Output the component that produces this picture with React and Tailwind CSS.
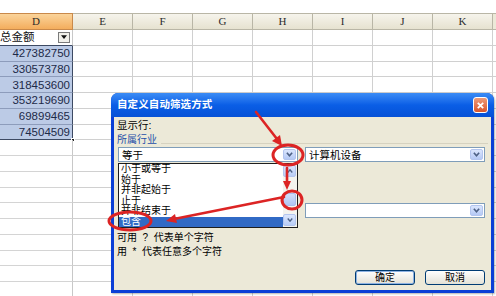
import React from "react";

const CJK = { fontFamily: '"Liberation Sans", "Noto Sans CJK SC", sans-serif' };

const cols = ["D", "E", "F", "G", "H", "I", "J", "K"];
const nums = ["427382750", "330573780", "318453600", "353219690", "69899465", "74504509"];

function Chevron({ className = "" }) {
  return (
    <svg viewBox="0 0 10 8" className={className}>
      <polyline points="2,2 5,5.5 8,2" fill="none" stroke="#4d6185" strokeWidth="1.8" />
    </svg>
  );
}

function ChevronUp({ className = "" }) {
  return (
    <svg viewBox="0 0 10 8" className={className}>
      <polyline points="2,6 5,2.5 8,6" fill="none" stroke="#4d6185" strokeWidth="1.8" />
    </svg>
  );
}

function ComboBtn() {
  return (
    <div className="w-[13px] h-full bg-gradient-to-b from-[#dbe6fd] to-[#b5c9f5] border border-[#b3c5ef] rounded-[2px] flex items-center justify-center">
      <Chevron className="w-[9px] h-[7px]" />
    </div>
  );
}

function Combo({ text, className = "" }) {
  return (
    <div className={"h-[15px] bg-white border border-[#7f9db9] flex items-stretch p-[1px] " + className}>
      <div className="flex-1 pl-[2px] text-[10.5px] leading-[12px] text-black">{text}</div>
      <ComboBtn />
    </div>
  );
}

function SheetRow({ i }) {
  const isHead = i === 0;
  const isData = i >= 1 && i <= 6;
  return (
    <div className="flex h-[15.75px]">
      <div
        className={
          "relative w-[73px] shrink-0 border-r flex items-center justify-end pr-[2px] " +
          (isData
            ? "bg-[#bccbe6] border-r-[#3d4a63] border-b border-b-[#8d9cbb] text-[#1d2a48]"
            : isHead
            ? "bg-white border-r-[#c8c8c8] border-b border-b-[#3d4a63]"
            : "border-r-[#c8c8c8] border-b border-b-[#d4d4d4]") +
          (i === 6 ? " !border-b-[#3d4a63]" : "")
        }
      >
        {isHead && (
          <>
            <span className="absolute left-0 top-[1px] text-[11.5px] leading-[13px] text-[#111]" style={CJK}>
              总金额
            </span>
            <div className="w-[12px] h-[11px] border border-[#7a7a7a] bg-[#f1f0ea] flex items-center justify-center">
              <svg viewBox="0 0 8 5" className="w-[6px] h-[4px]">
                <polygon points="0,0 8,0 4,5" fill="#111" />
              </svg>
            </div>
          </>
        )}
        {isData && (
          <span className="text-[11.5px] leading-[13px] mt-[1px]" style={{ fontFamily: '"Liberation Sans", sans-serif' }}>
            {nums[i - 1]}
          </span>
        )}
        {i === 6 && <div className="absolute right-[-3px] bottom-[-3px] w-[4px] h-[4px] bg-[#222] border border-white" />}
      </div>
      {cols.slice(1).map((c) => (
        <div key={c} className="w-[60px] shrink-0 border-r border-b border-[#d0d0d0]" />
      ))}
      <div className="flex-1 border-b border-[#d0d0d0]" />
    </div>
  );
}

export default function App() {
  const listItems = ["小于或等于", "始于", "并非起始于", "止于", "并非结束于", "包含"];
  return (
    <div className="relative w-[496px] h-[296px] overflow-hidden bg-white" style={CJK}>
      <div className="h-[13px] bg-white" />
      {/* header */}
      <div className="flex h-[17px]">
        {cols.map((c, idx) => (
          <div
            key={c}
            className={
              (idx === 0
                ? "w-[73px] bg-gradient-to-b from-[#fbd49a] to-[#f3ad5c] border-[#c9894a] "
                : "w-[60px] bg-gradient-to-b from-[#f6f4ec] to-[#e6e2d0] border-[#b9b6a6] ") +
              "shrink-0 border-r border-b border-t flex items-center justify-center text-[11px] text-[#2b2b2b]"
            }
            style={{ fontFamily: '"Liberation Serif", serif' }}
          >
            {c}
          </div>
        ))}
        <div className="flex-1 bg-[#ece9d8] border-b border-t border-[#b9b6a6]" />
      </div>
      {Array.from({ length: 17 }).map((_, i) => (
        <SheetRow key={i} i={i} />
      ))}

      {/* dialog */}
      <div className="absolute left-[111px] top-[93px] w-[383px] h-[200px] rounded-t-[7px] bg-[#0b3fd6] flex flex-col overflow-hidden shadow-[1px_1px_2px_rgba(0,0,0,0.3)]">
        <div className="h-[24px] shrink-0 bg-gradient-to-b from-[#3b8cf5] via-[#0a5ee6] to-[#0651d6] flex items-center justify-between pl-[6px] pr-[6px]">
          <span className="text-white font-bold text-[10.5px] tracking-[0.1px]" style={CJK}>
            自定义自动筛选方式
          </span>
          <div className="w-[15px] h-[16px] rounded-[3px] border border-white bg-gradient-to-b from-[#ed9a78] to-[#d8552b] flex items-center justify-center">
            <svg viewBox="0 0 10 10" className="w-[9px] h-[9px]">
              <path d="M2 2 L8 8 M8 2 L2 8" stroke="white" strokeWidth="2" />
            </svg>
          </div>
        </div>
        <div className="relative flex-1 mx-[3px] mb-[3px] bg-[#ece9d8] px-[3px] flex flex-col">
          <div className="mt-[2px] h-[12px] text-[10.5px] leading-[12px] text-black">显示行:</div>
          <div className="mt-[3px] h-[12px] flex items-center">
            <span className="text-[10px] leading-[12px] text-[#1d4fa8]">所属行业</span>
            <div className="flex-1 ml-[4px] mt-[6px] h-[1px] bg-[#d6d2c0]" />
          </div>
          <div className="mt-[1px] flex gap-[7px] pl-[1px]">
            <Combo text="等于" className="w-[180px]" />
            <Combo text="计算机设备" className="w-[180px]" />
          </div>
          <div className="mt-[41px] flex gap-[7px] pl-[1px]">
            <div className="w-[180px]" />
            <Combo text="" className="w-[180px] h-[14px]" />
          </div>
          <div className="mt-[14px] h-[12px] text-[10px] leading-[12px] text-black whitespace-pre">可用  ?  代表单个字符</div>
          <div className="mt-[2px] h-[12px] text-[10px] leading-[12px] text-black whitespace-pre">用  *  代表任意多个字符</div>
          <div className="mt-[12px] flex justify-end gap-[10px] pr-[3px]">
            <div className="w-[60px] h-[15px] rounded-[3px] border border-[#003c74] bg-gradient-to-b from-white to-[#e3e1d6] shadow-[inset_0_0_0_1px_#8db2e3] flex items-center justify-center text-[10px] text-black">
              确定
            </div>
            <div className="w-[60px] h-[15px] rounded-[3px] border border-[#003c74] bg-gradient-to-b from-white to-[#e3e1d6] flex items-center justify-center text-[10px] text-black">
              取消
            </div>
          </div>

          {/* dropdown list */}
          <div className="absolute left-[4px] top-[46px] w-[180px] h-[65px] bg-white border border-[#1e1e1e] flex">
            <div className="flex-1 flex flex-col">
              {listItems.map((t, i) => (
                <div
                  key={t}
                  className={
                    "h-[10.5px] pl-[2px] text-[10px] leading-[10.5px] " +
                    (i === 5 ? "bg-[#316ac5] text-white" : "text-black")
                  }
                >
                  {t}
                </div>
              ))}
            </div>
            <div className="w-[14px] bg-[#f3f3ee] flex flex-col items-stretch py-[1px] pr-[1px]">
              <div className="h-[12px] rounded-[2px] bg-gradient-to-b from-[#dbe6fd] to-[#b9cdf6] border border-[#b3c5ef] flex items-center justify-center">
                <ChevronUp className="w-[8px] h-[6px]" />
              </div>
              <div className="mt-[16px] h-[13px] rounded-[2px] bg-gradient-to-b from-[#d1defb] to-[#b0c5f3] border border-[#a9bdec]" />
              <div className="flex-1" />
              <div className="h-[12px] rounded-[2px] bg-gradient-to-b from-[#dbe6fd] to-[#b9cdf6] border border-[#b3c5ef] flex items-center justify-center">
                <Chevron className="w-[8px] h-[6px]" />
              </div>
            </div>
          </div>
        </div>
      </div>

      {/* red annotations */}
      <svg className="absolute left-0 top-0 w-[496px] h-[296px] pointer-events-none" viewBox="0 0 496 296">
        <g fill="none" stroke="#dc2424" strokeWidth="3">
          <ellipse cx="288" cy="155" rx="15" ry="10" />
          <ellipse cx="292" cy="200" rx="10" ry="9" />
          <ellipse cx="130" cy="221" rx="21" ry="9" />
        </g>
        <g stroke="#dc2424" strokeWidth="2.6" strokeLinecap="round">
          <line x1="256" y1="112" x2="277" y2="139" />
          <line x1="287" y1="168" x2="287" y2="183" />
          <line x1="284" y1="197" x2="174" y2="219" />
        </g>
        <g fill="#dc2424">
          <polygon points="282,146 272,141 280,135" />
          <polygon points="287,190 283,181 291,181" />
          <polygon points="166,221 175,214 177,223" />
        </g>
      </svg>
    </div>
  );
}
